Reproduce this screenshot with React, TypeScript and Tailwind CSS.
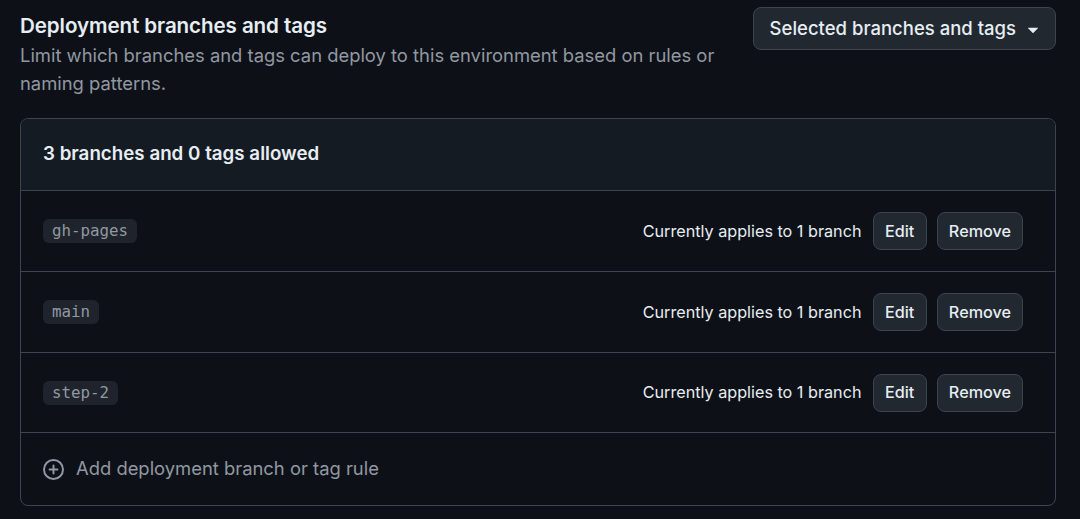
import { useState } from "react";

type Rule = {
  name: string;
  applies: string;
};

const rules: Rule[] = [
  { name: "gh-pages", applies: "Currently applies to 1 branch" },
  { name: "main", applies: "Currently applies to 1 branch" },
  { name: "step-2", applies: "Currently applies to 1 branch" },
];

export default function App() {
  const [selected] = useState("Selected branches and tags");

  return (
    <main
      className="min-h-screen w-full bg-[#0d1117] pl-5 pr-6 pt-[7px] text-[#e6edf3]"
      style={{ fontFamily: "Inter, 'Liberation Sans', sans-serif" }}
    >
      {/* Heading + dropdown */}
      <div className="flex flex-row items-start justify-between">
        <div className="max-w-[720px] pt-[5px]">
          <h2 className="text-[20.6px] font-semibold leading-[28px] tracking-[-0.1px]">
            Deployment branches and tags
          </h2>
          <p className="mt-[1px] text-[18.4px] leading-[28px] text-[#9198a1]">
            Limit which branches and tags can deploy to this environment based
            on rules or naming patterns.
          </p>
        </div>
        <button className="flex h-[43px] flex-row items-center gap-[6px] rounded-lg border border-[#3d444d] bg-[#212830] pl-4 pr-[11px] text-[18.5px] font-medium text-[#e6edf3]">
          {selected}
          <svg width="22" height="22" viewBox="0 0 16 16" fill="currentColor">
            <path d="m4.427 7.427 3.396 3.396a.25.25 0 0 0 .354 0l3.396-3.396A.25.25 0 0 0 11.396 7H4.604a.25.25 0 0 0-.177.427Z" />
          </svg>
        </button>
      </div>

      {/* Rules box */}
      <div className="mt-[21px] overflow-hidden rounded-lg border border-[#3d444d]">
        <div className="flex h-[72px] items-center border-b border-[#3d444d] bg-[#151b23] px-[22px]">
          <h3 className="text-[18.75px] font-semibold">
            3 branches and 0 tags allowed
          </h3>
        </div>
        {rules.map((rule, i) => (
          <div
            key={rule.name}
            className={
              i === rules.length - 1
                ? "flex h-[80px] flex-row items-center justify-between border-b border-[#3d444d] pl-[22px] pr-8"
                : "flex h-[81px] flex-row items-center justify-between border-b border-[#3d444d] pl-[22px] pr-8"
            }
          >
            <code
              className="rounded-md bg-[#1f242c] px-[9px] py-[2px] text-[15.8px] leading-[20px] text-[#9198a1]"
              style={{ fontFamily: "'DejaVu Sans Mono', 'Liberation Mono', monospace" }}
            >
              {rule.name}
            </code>
            <div className="flex flex-row items-center gap-[10px]">
              <span className="mr-[1px] text-[16.2px]">{rule.applies}</span>
              <button className="h-[38px] rounded-lg border border-[#3d444d] bg-[#212830] px-[11.5px] text-[16.2px] font-medium">
                Edit
              </button>
              <button className="h-[38px] rounded-lg border border-[#3d444d] bg-[#212830] px-[11px] text-[16.2px] font-medium">
                Remove
              </button>
            </div>
          </div>
        ))}
        <div className="flex h-[72px] flex-row items-center gap-3 px-[22px] text-[18.4px] text-[#9198a1]">
          <svg width="21" height="21" viewBox="0 0 16 16" fill="currentColor">
            <path d="M7.75 4.5a.75.75 0 0 1 .75.75V7.5h2.25a.75.75 0 0 1 0 1.5H8.5v2.25a.75.75 0 0 1-1.5 0V9H4.75a.75.75 0 0 1 0-1.5H7V5.25a.75.75 0 0 1 .75-.75Z" transform="translate(0.25 -0.25)" />
            <path d="M8 0a8 8 0 1 1 0 16A8 8 0 0 1 8 0ZM1.5 8a6.5 6.5 0 1 0 13 0 6.5 6.5 0 0 0-13 0Z" />
          </svg>
          Add deployment branch or tag rule
        </div>
      </div>
    </main>
  );
}
